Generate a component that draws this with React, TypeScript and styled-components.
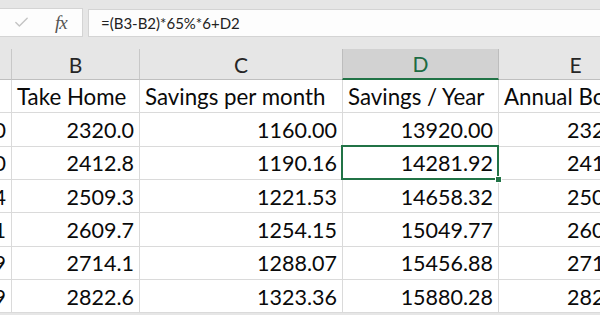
import React from "react";
import styled, { createGlobalStyle } from "styled-components";
import { Check } from "lucide-react";

const Global = createGlobalStyle`
  html, body { margin: 0; padding: 0; background: #e6e6e6; }
  * { box-sizing: border-box; }
`;

const Frame = styled.div`
  width: 600px;
  height: 315px;
  overflow: hidden;
  background: #e6e6e6;
  font-family: Lato, "Open Sans", sans-serif;
`;

const FormulaBar = styled.div`
  display: flex;
  gap: 5px;
  height: 37px;
  padding-top: 8px;
`;

const ToolBox = styled.div`
  width: 84px;
  height: 29px;
  margin-left: -1px;
  background: #fdfdfd;
  border: 1px solid #d4d4d4;
  display: flex;
  align-items: center;
  padding-left: 13px;
`;

const Fx = styled.span`
  font-family: "Liberation Serif", serif;
  font-style: italic;
  font-size: 19px;
  color: #555;
  margin-left: 25px;
  letter-spacing: -1px;
`;

const FormulaInput = styled.div`
  flex: 1;
  height: 28px;
  margin-top: 1px;
  margin-right: -2px;
  background: #fdfdfd;
  border: 1px solid #d4d4d4;
  display: flex;
  align-items: center;
  padding-left: 12px;
  font-size: 15px;
  color: #222;
`;

const Sheet = styled.div`
  margin-top: 12px;
  display: grid;
  grid-template-columns: 12px 128px 203px 156px 154px;
  grid-template-rows: 31px repeat(7, 33.33px);
  width: 653px;
  background: #fff;
`;

const HeaderCell = styled.div<{ $active?: boolean }>`
  background: ${(p) => (p.$active ? "#d2d2d2" : "#e6e6e6")};
  border-right: 1px solid ${(p) => (p.$active ? "#bdbdbd" : "#c8c8c8")};
  border-left: ${(p) => (p.$active ? "1px solid #bdbdbd" : "none")};
  margin-left: ${(p) => (p.$active ? "-1px" : "0")};
  border-bottom: ${(p) => (p.$active ? "2px solid #217346" : "1px solid #bfbfbf")};
  display: flex;
  align-items: center;
  justify-content: center;
  font-size: 21px;
  color: ${(p) => (p.$active ? "#1d6b43" : "#262626")};
`;

const Cell = styled.div<{ $right?: boolean; $selected?: boolean; $title?: boolean }>`
  position: relative;
  overflow: ${(p) => (p.$selected ? "visible" : "hidden")};
  white-space: nowrap;
  border-right: 1px solid #dadada;
  border-bottom: 1px solid #dadada;
  display: flex;
  align-items: flex-end;
  justify-content: ${(p) => (p.$right ? "flex-end" : "flex-start")};
  padding: 0 5px 4px 5px;
  font-size: ${(p) => (p.$title ? "22.3px" : "21.5px")};
  line-height: 1;
  color: #0a0a0a;

  ${(p) =>
    p.$selected &&
    `
    &::after {
      content: "";
      position: absolute;
      left: -2px;
      top: -2px;
      right: -1px;
      bottom: -1px;
      border: 2px solid #217346;
      pointer-events: none;
    }
    &::before {
      content: "";
      position: absolute;
      right: -4px;
      bottom: -4px;
      width: 5px;
      height: 5px;
      background: #217346;
      border: 1px solid #fff;
      box-sizing: content-box;
      z-index: 1;
    }
  `}
`;

const columns = ["", "B", "C", "D", "E"];
const headers = ["", "Take Home", "Savings per month", "Savings / Year", "Annual Bonus"];
const rows = [
  ["29000", "2320.0", "1160.00", "13920.00", "2320.00"],
  ["30160", "2412.8", "1190.16", "14281.92", "2412.80"],
  ["31364", "2509.3", "1221.53", "14658.32", "2509.30"],
  ["32621", "2609.7", "1254.15", "15049.77", "2609.70"],
  ["33929", "2714.1", "1288.07", "15456.88", "2714.10"],
  ["35289", "2822.6", "1323.36", "15880.28", "2822.60"],
];

export default function App() {
  return (
    <Frame>
      <Global />
      <FormulaBar>
        <ToolBox>
          <Check size={17} color="#c4c4c4" strokeWidth={2} />
          <Fx>fx</Fx>
        </ToolBox>
        <FormulaInput>=(B3-B2)*65%*6+D2</FormulaInput>
      </FormulaBar>
      <Sheet>
        {columns.map((c, i) => (
          <HeaderCell key={"h" + i} $active={c === "D"}>
            {c}
          </HeaderCell>
        ))}
        {headers.map((h, i) => (
          <Cell key={"t" + i} $title>
            {h}
          </Cell>
        ))}
        {rows.map((r, ri) =>
          r.map((v, ci) => (
            <Cell key={ri + "-" + ci} $right $selected={ri === 1 && ci === 3}>
              {v}
            </Cell>
          ))
        )}
      </Sheet>
    </Frame>
  );
}
